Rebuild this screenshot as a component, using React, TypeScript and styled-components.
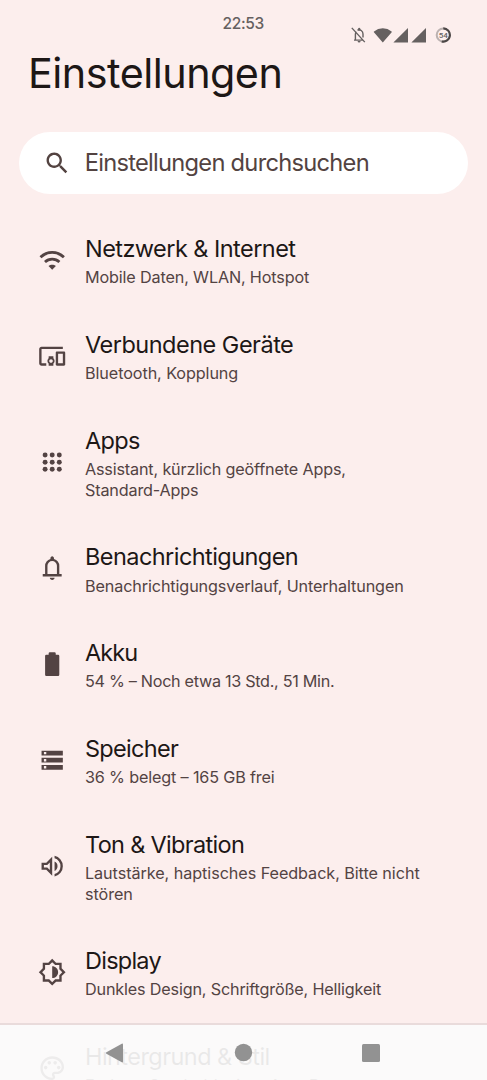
import React from 'react';
import styled, { createGlobalStyle } from 'styled-components';

const GlobalStyle = createGlobalStyle`
  * { box-sizing: border-box; }
  body {
    margin: 0;
    background: #fceeed;
    font-family: Inter, Roboto, sans-serif;
  }
`;

const Screen = styled.main`
  position: relative;
  width: 100%;
  height: 1080px;
  overflow: hidden;
  background: #fceeed;
`;

const StatusBar = styled.header`
  display: flex;
  justify-content: space-between;
  height: 48px;
  padding: 14px 36px 0 222.6px;
  color: #656060;
`;

const Clock = styled.time`
  font-size: 15.5px;
  font-weight: 500;
  line-height: 20px;
  letter-spacing: -0.4px;
`;

const StatusIcons = styled.div`
  display: flex;
  align-items: center;
  height: 18px;
  margin-top: 12px;
`;

const StatusSvg = styled.svg`
  display: block;
`;

const Heading = styled.h1`
  margin: 0 0 0 28px;
  height: 84px;
  color: #1d1716;
  font-size: 41.3px;
  font-weight: 400;
  line-height: 51px;
  letter-spacing: -0.5px;
`;

const SearchBar = styled.div`
  display: flex;
  align-items: center;
  height: 61.4px;
  margin: 0.3px 19px 19.4px;
  padding-left: 24px;
  border-radius: 31px;
  background: #fff;
  color: #534341;
`;

const SearchText = styled.span`
  margin-left: 13.3px;
  font-size: 23.7px;
  line-height: 32px;
  letter-spacing: -0.74px;
`;

const Icon = styled.svg`
  display: block;
  flex: none;
  width: 28.4px;
  height: 28.4px;
  fill: currentColor;
`;

const List = styled.ul`
  margin: 0;
  padding: 0;
  list-style: none;
`;

const Item = styled.li`
  display: flex;
  align-items: center;
  gap: 18.8px;
  padding: 19.9px 42px 20.9px 37.8px;
  color: #534343;
`;

const Labels = styled.div`
  flex: 1;
`;

const Title = styled.div<{ $tracking: number }>`
  color: #1d1716;
  font-size: 23.5px;
  line-height: 32px;
  letter-spacing: ${(p) => p.$tracking}px;
  white-space: nowrap;
`;

const Summary = styled.div<{ $tracking: number }>`
  margin-top: 2.4px;
  font-size: 16.2px;
  line-height: 20.65px;
  letter-spacing: ${(p) => p.$tracking}px;
  white-space: pre-line;
`;

const NavBar = styled.nav`
  position: absolute;
  left: 0;
  right: 0;
  bottom: 0;
  display: flex;
  justify-content: space-between;
  align-items: center;
  height: 57px;
  padding: 0 106px 0 105px;
  border-top: 2px solid #e9dbdb;
  background: rgba(251, 251, 251, 0.92);
  background-clip: padding-box;
`;

const NavSvg = styled.svg`
  display: block;
  width: 20px;
  height: 20px;
  fill: #929292;
`;

const wifi = (
  <>
    <g fill="none" stroke="currentColor" strokeWidth="2.3">
      <path d="M2.1 9.5a14.2 14.2 0 0 1 19.8 0" />
      <path d="M5.9 13.5a8.8 8.8 0 0 1 12.2 0" />
    </g>
    <path d="M12 20.1l3.1-3.1c-1.7-1.6-4.5-1.6-6.2 0z" />
  </>
);

const devices = (
  <path d="M3 6h18V4H3c-1.1 0-2 .9-2 2v12c0 1.1.9 2 2 2h4v-2H3V6zm10 6H9v1.78c-.61.55-1 1.33-1 2.22s.39 1.67 1 2.22V20h4v-1.78c.61-.55 1-1.34 1-2.22s-.39-1.67-1-2.22V12zm-2 5.5c-.83 0-1.5-.67-1.5-1.5s.67-1.5 1.5-1.5 1.5.67 1.5 1.5-.67 1.5-1.5 1.5zM22 8h-6c-.5 0-1 .5-1 1v10c0 .5.5 1 1 1h6c.5 0 1-.5 1-1V9c0-.5-.5-1-1-1zm-1 10h-4v-8h4v8z" />
);

const apps = (
  <>
    {[6, 12, 18].map((y) => [6, 12, 18].map((x) => <circle key={`${x}-${y}`} cx={x} cy={y} r="2.1" />))}
  </>
);

const bell = (
  <path d="M4 19v-2h2v-7q0-2.075 1.25-3.688T10.5 4.2v-.7q0-.625.438-1.062T12 2t1.063.438T13.5 3.5v.7q2 .5 3.25 2.112T18 10v7h2v2zm8 3q-.825 0-1.412-.587T10 20h4q0 .825-.587 1.413T12 22m-4-5h8v-7q0-1.65-1.175-2.825T12 6 9.175 7.175 8 10z" />
);

const battery = (
  <path d="M7 22q-1 0-1-1V5q0-1 1-1h2V3q0-1 1-1h4q1 0 1 1v1h2q1 0 1 1v16q0 1-1 1z" />
);

const storage = (
  <path
    fillRule="evenodd"
    d="M3 20v-4h18v4zm2-1h2v-2H5zM3 8V4h18v4zm2-1h2V5H5zM3 14v-4h18v4zm2-1h2v-2H5z"
  />
);

const volume = (
  <path d="M14 20.725v-2.05q2.25-.65 3.625-2.5t1.375-4.2-1.375-4.2T14 5.275v-2.05q3.1.7 5.05 3.138T21 11.975t-1.95 5.612T14 20.725M3 15V9h4l5-5v16l-5-5zm11 1V7.95q1.175.55 1.838 1.65T16.5 12q0 1.275-.663 2.363T14 16m-4-7.15L7.85 11H5v2h2.85L10 15.15z" />
);

const brightness = (
  <path d="M20 15.31L23.31 12 20 8.69V4h-4.69L12 .69 8.69 4H4v4.69L.69 12 4 15.31V20h4.69L12 23.31 15.31 20H20zM18 14.5V18h-3.5L12 20.5 9.5 18H6v-3.5L3.5 12 6 9.5V6h3.5L12 3.5 14.5 6H18v3.5l2.5 2.5zM12 17V7c2.76 0 5 2.24 5 5s-2.24 5-5 5z" fillRule="evenodd" />
);

const palette = (
  <>
    <path d="M12 22C6.49 22 2 17.51 2 12S6.49 2 12 2s10 4.04 10 9c0 3.31-2.69 6-6 6h-1.77c-.28 0-.5.22-.5.5 0 .12.05.23.13.33.41.47.64 1.06.64 1.67 0 1.38-1.12 2.5-2.5 2.5zm0-18c-4.41 0-8 3.59-8 8s3.59 8 8 8c.28 0 .5-.22.5-.5 0-.16-.08-.28-.14-.35-.41-.46-.63-1.05-.63-1.65 0-1.38 1.12-2.5 2.5-2.5H16c2.21 0 4-1.79 4-4 0-3.86-3.59-7-8-7z" />
    <circle cx="6.5" cy="11.5" r="1.5" />
    <circle cx="9.5" cy="7.5" r="1.5" />
    <circle cx="14.5" cy="7.5" r="1.5" />
    <circle cx="17.5" cy="11.5" r="1.5" />
  </>
);

type Entry = {
  title: string;
  titleTracking: number;
  summary: string;
  summaryTracking: number;
  icon: React.ReactNode;
};

const entries: Entry[] = [
  { title: 'Netzwerk & Internet', titleTracking: -0.55, summary: 'Mobile Daten, WLAN, Hotspot', summaryTracking: -0.15, icon: wifi },
  { title: 'Verbundene Geräte', titleTracking: -0.5, summary: 'Bluetooth, Kopplung', summaryTracking: -0.09, icon: devices },
  { title: 'Apps', titleTracking: -0.65, summary: 'Assistant, kürzlich geöffnete Apps,\nStandard-Apps', summaryTracking: -0.17, icon: apps },
  { title: 'Benachrichtigungen', titleTracking: -0.56, summary: 'Benachrichtigungsverlauf, Unterhaltungen', summaryTracking: -0.12, icon: bell },
  { title: 'Akku', titleTracking: -0.95, summary: '54 % – Noch etwa 13 Std., 51 Min.', summaryTracking: -0.3, icon: battery },
  { title: 'Speicher', titleTracking: -0.7, summary: '36 % belegt – 165 GB frei', summaryTracking: -0.16, icon: storage },
  { title: 'Ton & Vibration', titleTracking: -0.68, summary: 'Lautstärke, haptisches Feedback, Bitte nicht stören', summaryTracking: -0.065, icon: volume },
  { title: 'Display', titleTracking: -0.75, summary: 'Dunkles Design, Schriftgröße, Helligkeit', summaryTracking: -0.17, icon: brightness },
  { title: 'Hintergrund & Stil', titleTracking: -0.55, summary: 'Farben, Symboldesign, App-Raster', summaryTracking: 0.2, icon: palette },
];

export default function App() {
  return (
    <Screen>
      <GlobalStyle />
      <StatusBar>
        <Clock>22:53</Clock>
        <StatusIcons>
          <StatusSvg width="101" height="18" viewBox="0 0 101 18" fill="#656060">
            <g fill="none" stroke="#656060" strokeWidth="1.4">
              <path d="M4 14.1h9.4M5.4 14V8.2c0-1.1.3-1.9.9-2.6M7.4 4.2C10.2 3 13 5 13 8v3.4M1.8 1.9l13 14.2" />
            </g>
            <path d="M8.1 2.4a1.3 1.3 0 0 1 2.2 0v2H8.1zM7.6 15h3a1.5 1.5 0 0 1-3 0z" />
            <path d="M24 5.4a14 14 0 0 1 17.6 0 .6.6 0 0 1 .1.8L32.8 16.6 23.9 6.2a.6.6 0 0 1 .1-.8z" />
            <path d="M58 2v14.6H43.4zM76 2v14.6H61.4z" />
            <circle cx="93.3" cy="9" r="6.6" fill="none" stroke="#bbb1b0" strokeWidth="2" />
            <path d="M93.3 2.4a6.6 6.6 0 1 1-1.6 13" fill="none" stroke="#4b4646" strokeWidth="2.1" />
            <text x="93.3" y="11.9" textAnchor="middle" fontFamily="Roboto, sans-serif" fontSize="8" fontWeight="500">54</text>
          </StatusSvg>
        </StatusIcons>
      </StatusBar>
      <Heading>Einstellungen</Heading>
      <SearchBar>
        <Icon viewBox="0 0 24 24">
          <path d="M15.5 14h-.79l-.28-.27C15.41 12.59 16 11.11 16 9.5 16 5.91 13.09 3 9.5 3S3 5.91 3 9.5 5.91 16 9.5 16c1.61 0 3.09-.59 4.23-1.57l.27.28v.79l5 4.99L20.49 19zm-6 0C7.01 14 5 11.99 5 9.5S7.01 5 9.5 5 14 7.01 14 9.5 11.99 14 9.5 14z" />
        </Icon>
        <SearchText>Einstellungen durchsuchen</SearchText>
      </SearchBar>
      <List>
        {entries.map((entry) => (
          <Item key={entry.title}>
            <Icon viewBox="0 0 24 24">{entry.icon}</Icon>
            <Labels>
              <Title $tracking={entry.titleTracking}>{entry.title}</Title>
              <Summary $tracking={entry.summaryTracking}>{entry.summary}</Summary>
            </Labels>
          </Item>
        ))}
      </List>
      <NavBar>
        <NavSvg viewBox="0 0 20 20">
          <path d="M1.4 9.2 16.8.7q1.2-.5 1.2.7v17.2q0 1.2-1.2.7L1.4 10.8q-1.2-.8 0-1.6z" />
        </NavSvg>
        <NavSvg viewBox="0 0 20 20">
          <circle cx="10.5" cy="9.5" r="8.7" />
        </NavSvg>
        <NavSvg viewBox="0 0 20 20">
          <rect x="1" y="1" width="18" height="18" rx="1.5" />
        </NavSvg>
      </NavBar>
    </Screen>
  );
}
